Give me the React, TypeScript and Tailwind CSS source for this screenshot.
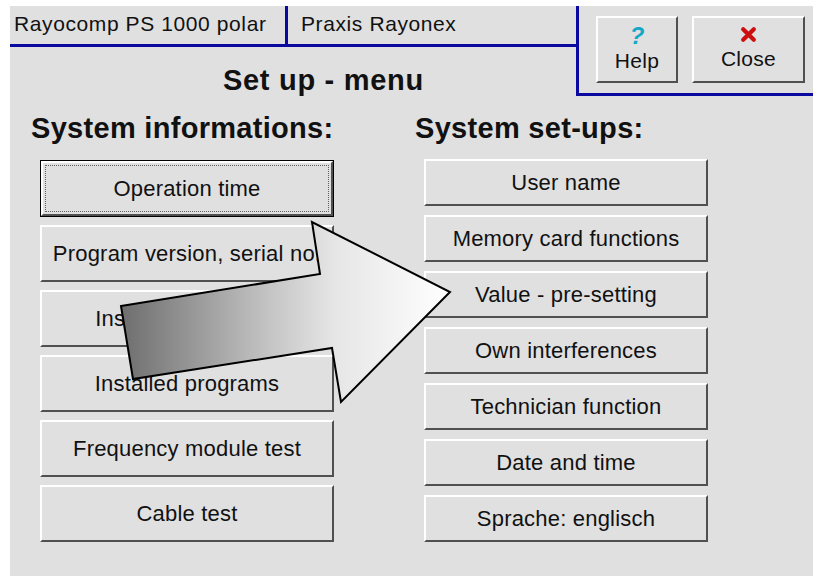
import React from 'react';

const font = { fontFamily: '"Liberation Sans", Arial, sans-serif' };

const leftItems = [
  'Operation time',
  'Program version, serial no.',
  'Installed hardware',
  'Installed programs',
  'Frequency module test',
  'Cable test',
];

const rightItems = [
  'User name',
  'Memory card functions',
  'Value - pre-setting',
  'Own interferences',
  'Technician function',
  'Date and time',
  'Sprache: englisch',
];

const bevel =
  'border-t-2 border-l-2 border-white border-b-2 border-r-2 border-b-[#505050] border-r-[#505050]';

const Btn: React.FC<{ label: string; focused?: boolean; className?: string }> = ({
  label,
  focused,
  className,
}) => {
  if (focused) {
    return (
      <div className={`border border-black ${className}`}>
        <div className={`h-full ${bevel} p-[2px]`}>
          <div className="h-full flex items-center justify-center border border-dotted border-[#606060] text-[22px] tracking-[0.2px] text-[#111]">
            {label}
          </div>
        </div>
      </div>
    );
  }
  return (
    <div
      className={`flex items-center justify-center ${bevel} text-[22px] tracking-[0.2px] text-[#111] whitespace-nowrap overflow-hidden ${className}`}
    >
      {label}
    </div>
  );
};

const Arrow: React.FC = () => (
  <svg className="absolute left-0 top-0 pointer-events-none" width="813" height="576">
    <defs>
      <linearGradient id="ag" x1="121" y1="0" x2="450" y2="0" gradientUnits="userSpaceOnUse">
        <stop offset="0" stopColor="#6e6e6e" />
        <stop offset="0.45" stopColor="#c4c4c4" />
        <stop offset="0.65" stopColor="#e6e6e6" />
        <stop offset="1" stopColor="#ffffff" />
      </linearGradient>
    </defs>
    <polygon
      points="121,306 320,274 312,222 450,292 341,402 332,348 133,379"
      fill="url(#ag)"
      stroke="#000"
      strokeWidth="2"
      strokeLinejoin="miter"
    />
  </svg>
);

const App: React.FC = () => {
  return (
    <div className="relative w-[813px] h-[576px] bg-white pl-[10px] pt-[6px] overflow-hidden" style={font}>
      <div className="h-full bg-[#e0e0e0] flex flex-col">
        {/* top area */}
        <div className="flex">
          <div className="w-[566px] flex flex-col">
            <div className="flex h-[41px] border-b-[3px] border-[#0a0aa0]">
              <div className="w-[278px] border-r-[3px] border-[#0a0aa0] pl-[4px] pt-[7px] text-[21px] leading-none tracking-[0.6px] text-[#111] whitespace-nowrap">
                Rayocomp PS 1000 polar
              </div>
              <div className="pl-[13px] pt-[7px] text-[21px] leading-none tracking-[0.6px] text-[#111] whitespace-nowrap">
                Praxis Rayonex
              </div>
            </div>
            <div className="pl-[213px] pt-[19px] text-[29px] leading-none font-bold text-[#111] tracking-[0.7px] whitespace-nowrap">
              Set up - menu
            </div>
          </div>
          <div className="flex-1 h-[90px] border-l-[3px] border-b-[3px] border-[#0a0aa0] flex gap-[14px] pl-[17px] pt-[10px]">
            <div className={`w-[82px] h-[67px] flex flex-col items-center justify-center ${bevel}`}>
              <span className="text-[24px] font-bold italic leading-none text-[#14a8c8]">?</span>
              <span className="text-[21px] leading-tight text-[#111] tracking-[0.3px]">Help</span>
            </div>
            <div className={`w-[113px] h-[67px] flex flex-col items-center justify-center ${bevel}`}>
              <svg width="17" height="17" viewBox="0 0 16 16" className="mb-[3px]">
                <path d="M3 3 L13 13 M13 3 L3 13" stroke="#cc1010" strokeWidth="4" strokeLinecap="round" />
              </svg>
              <span className="text-[21px] leading-tight text-[#111] tracking-[0.3px]">Close</span>
            </div>
          </div>
        </div>

        {/* columns */}
        <div className="flex pt-[18px]">
          <div className="w-[384px] pl-[21px]">
            <div className="text-[29px] leading-none font-bold text-[#111] tracking-[0.3px] whitespace-nowrap">
              System informations:
            </div>
            <div className="flex flex-col gap-[8px] pl-[9px] mt-[17px]">
              {leftItems.map((l, i) => (
                <Btn key={l} label={l} focused={i === 0} className="h-[57px] w-[294px]" />
              ))}
            </div>
          </div>
          <div className="pl-[21px]">
            <div className="text-[29px] leading-none font-bold text-[#111] tracking-[0.3px] whitespace-nowrap">
              System set-ups:
            </div>
            <div className="flex flex-col gap-[9px] pl-[9px] mt-[16px]">
              {rightItems.map((l) => (
                <Btn key={l} label={l} className="h-[47px] w-[284px]" />
              ))}
            </div>
          </div>
        </div>
      </div>
      <Arrow />
    </div>
  );
};

export default App;
